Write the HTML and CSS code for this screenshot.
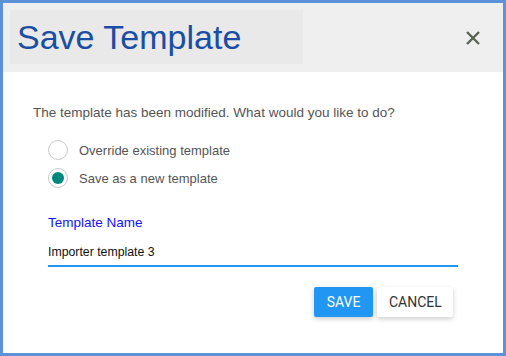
FILE: index.html
```html
<!DOCTYPE html>
<html lang="en">
<head>
    <meta charset="UTF-8">
    <title>Save Template</title>
    <link rel="stylesheet" href="styles.css">
</head>
<body>
    <div class="dialog">
        <header class="dialog-header">
            <div class="dialog-title">Save Template</div>
            <button class="close-btn" aria-label="Close">
                <svg width="16" height="16" viewBox="0 0 16 16">
                    <path d="M2 2 L14 14 M14 2 L2 14" stroke="#5b6452" stroke-width="2.4" fill="none"/>
                </svg>
            </button>
        </header>

        <div class="dialog-body">
            <p class="message">The template has been modified. What would you like to do?</p>

            <div class="options">
                <label class="option">
                    <span class="radio"></span>
                    Override existing template
                </label>
                <label class="option">
                    <span class="radio checked"></span>
                    Save as a new template
                </label>
            </div>

            <div class="field">
                <label class="field-label">Template Name</label>
                <div class="field-input">Importer template 3</div>
            </div>

            <div class="actions">
                <button class="btn btn-primary">SAVE</button>
                <button class="btn btn-default">CANCEL</button>
            </div>
        </div>
    </div>
</body>
</html>
```

FILE: styles.css
```css
* {
    box-sizing: border-box;
    margin: 0;
    padding: 0;
}

body {
    font-family: 'Liberation Sans', Arial, sans-serif;
    background: #fff;
    width: 506px;
    height: 356px;
}

.dialog {
    width: 506px;
    height: 356px;
    border: 3px solid #5b92d8;
    background: #fff;
}

.dialog-header {
    display: flex;
    align-items: center;
    justify-content: space-between;
    height: 69px;
    padding: 7px 22px 8px 7px;
    background: #efefef;
}

.dialog-title {
    width: 293px;
    height: 54px;
    padding: 4px 0 0 7px;
    background: #e9e9e9;
    color: #1b4ea3;
    font-size: 34px;
    line-height: 46px;
}

.close-btn {
    border: none;
    background: none;
    width: 16px;
    height: 16px;
    margin-top: 2px;
}

.close-btn svg {
    display: block;
}

.dialog-body {
    padding: 33px 45px 0 30px;
}

.message {
    font-size: 13.5px;
    color: #555;
    line-height: 16px;
}

.options {
    padding: 19px 0 0 15px;
    display: flex;
    flex-direction: column;
    gap: 8px;
}

.option {
    display: flex;
    align-items: center;
    gap: 11px;
    height: 20px;
    font-size: 13px;
    color: #555;
}

.radio {
    width: 20px;
    height: 20px;
    border: 1px solid #c8c8c8;
    border-radius: 50%;
    display: flex;
    align-items: center;
    justify-content: center;
}

.radio.checked::after {
    content: '';
    width: 12px;
    height: 12px;
    border-radius: 50%;
    background: #00897b;
}

.field {
    margin: 27px 0 0 15px;
}

.field-label {
    display: block;
    font-size: 13.5px;
    color: #1414ff;
    line-height: 16px;
}

.field-input {
    margin-top: 13px;
    padding-bottom: 5px;
    border-bottom: 2px solid #2196f3;
    font-size: 12.3px;
    color: #111;
    line-height: 16px;
}

.actions {
    display: flex;
    justify-content: flex-end;
    gap: 4px;
    margin: 20px 5px 0 0;
}

.btn {
    height: 30px;
    border: none;
    border-radius: 2px;
    font-family: Roboto, 'Liberation Sans', sans-serif;
    font-size: 14px;
    padding: 0 12px;
    box-shadow: 0 2px 5px rgba(0, 0, 0, 0.2);
}

.btn-primary {
    width: 59px;
    background: #2196f3;
    color: #fff;
}

.btn-default {
    width: 76px;
    background: #fff;
    color: #333;
}
```
